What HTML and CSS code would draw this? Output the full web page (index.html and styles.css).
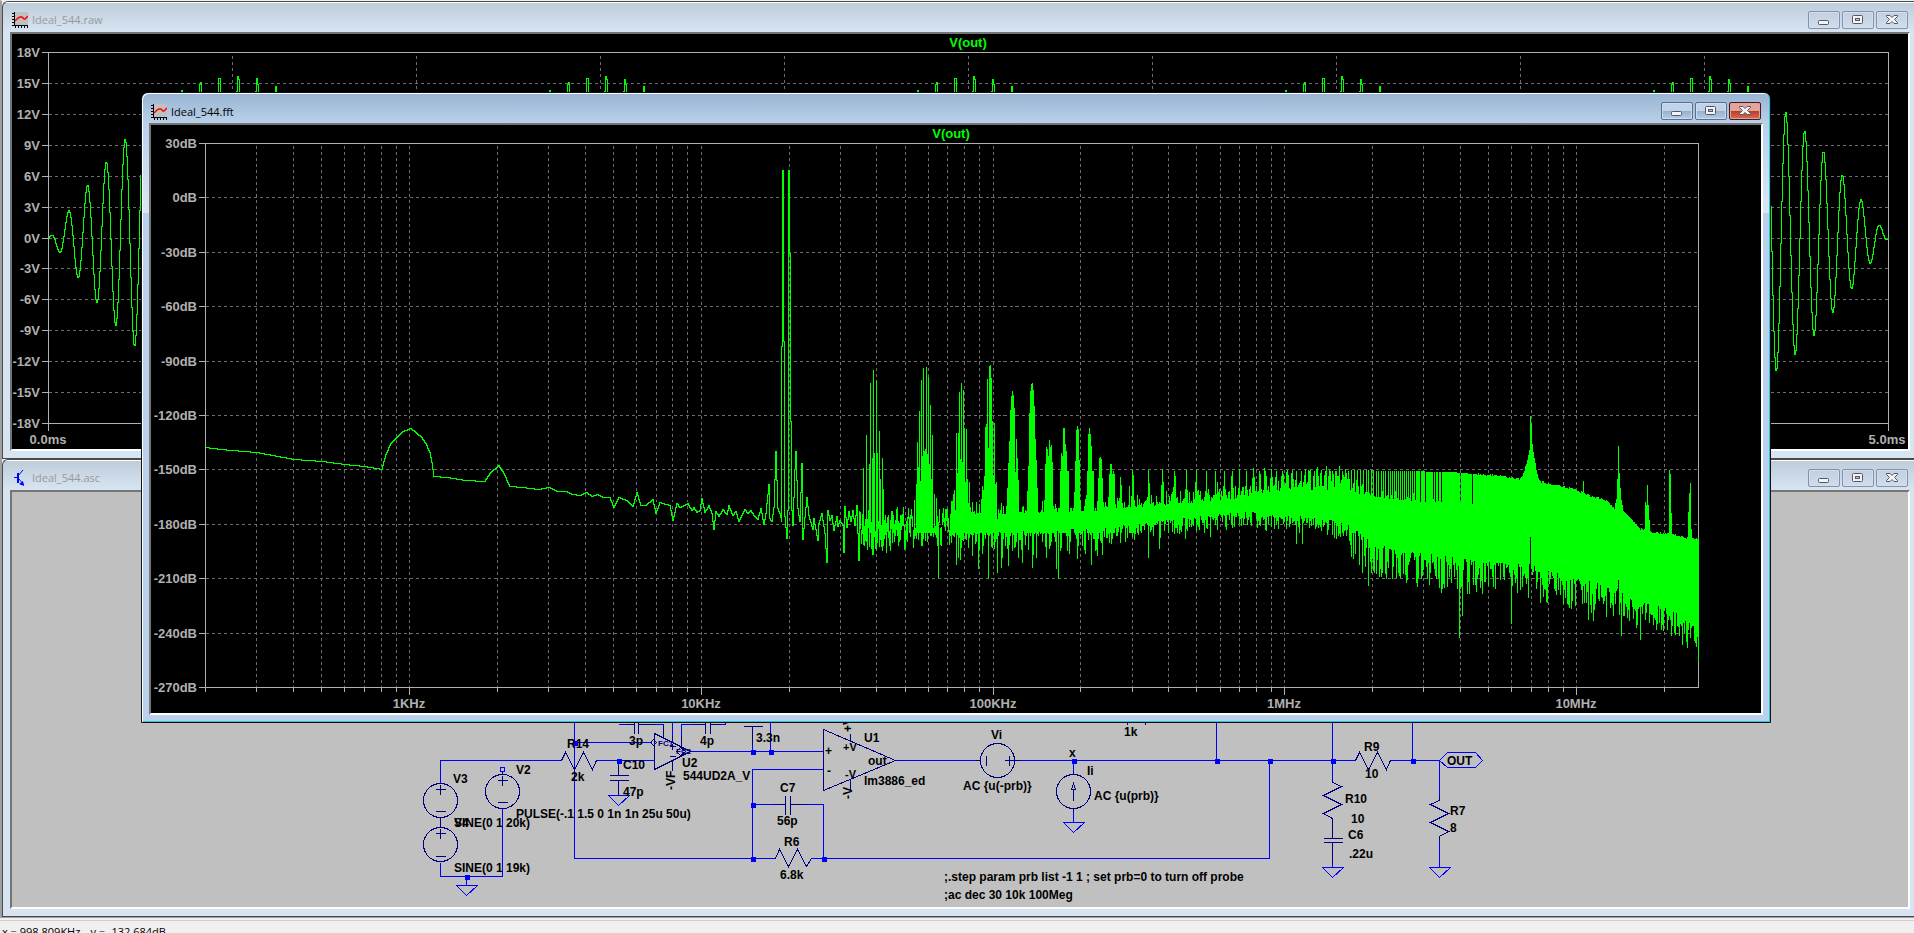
FILE: index.html
```html
<!DOCTYPE html>
<html lang="en">
<head>
    <meta charset="UTF-8">
    <meta name="viewport" content="width=device-width, initial-scale=1.0">
    <title>Ideal_544</title>
    <link rel="stylesheet" href="styles.css">
</head>
<body>
    <!-- shared icons -->
    <svg class="defs" aria-hidden="true">
        <symbol id="i-plot" viewBox="0 0 16 16">
            <path fill="#c0c0c0" d="M3 0h13v14H3z"/>
            <path fill="#000" d="M2 0h1v13h13v1H2zM0 1h2v1H0zM0 4h2v1H0zM0 7h2v1H0zM0 10h2v1H0zM0 13h2v1H0zM3 14h1v2H3zM6 14h1v2H6zM9 14h1v2H9zM12 14h1v2h-1zM15 14h1v2h-1z"/>
            <path fill="none" stroke="#f00" stroke-width="1.500" d="M3 9l3-3 2-1h2l2 2h1l3-3"/>
        </symbol>
        <symbol id="i-sch" viewBox="0 0 16 16">
            <path fill="none" stroke="#00f" stroke-width="2" d="M6 3v10"/>
            <path fill="none" stroke="#00f" d="M2 7.500h4M6 6l5-6M7 9l5 6"/>
            <path fill="#00f" d="M12 16l-5-2 4-3z"/>
        </symbol>
        <symbol id="i-min" viewBox="0 0 12 12">
            <rect x=".5" y="6.500" width="10" height="4" rx="1" fill="#f4f4f4" stroke="#535666"/>
        </symbol>
        <symbol id="i-max" viewBox="0 0 12 12">
            <rect x=".5" y="1.500" width="10" height="8" rx="1" fill="#f4f4f4" stroke="#535666"/>
            <rect x="3.500" y="4.500" width="4" height="2" fill="#b9cbe0" stroke="#535666"/>
        </symbol>
        <symbol id="i-close" viewBox="0 0 12 12">
            <path fill="#f4f4f4" stroke="#535666" d="M.5 1.500h3.500l2 2 2-2h3.500v1L8.500 5.500l3 3v1H8l-2-2-2 2H.5v-1l3-3-3-3z"/>
        </symbol>
    </svg>

    <main class="desktop">
        <section class="window">
            <header class="titlebar">
                <svg class="icon"><use href="#i-plot"/></svg>
                <h2>Ideal_544.raw</h2>
                <button type="button" aria-label="Minimize"><svg><use href="#i-min"/></svg></button>
                <button type="button" aria-label="Maximize"><svg><use href="#i-max"/></svg></button>
                <button type="button" aria-label="Close"><svg><use href="#i-close"/></svg></button>
            </header>
            <div class="client">
                <svg id="rawPlot" class="plot" viewBox="12 34 1896 415"></svg>
            </div>
        </section>

        <section class="window">
            <header class="titlebar">
                <svg class="icon"><use href="#i-sch"/></svg>
                <h2>Ideal_544.asc</h2>
                <button type="button" aria-label="Minimize"><svg><use href="#i-min"/></svg></button>
                <button type="button" aria-label="Maximize"><svg><use href="#i-max"/></svg></button>
                <button type="button" aria-label="Close"><svg><use href="#i-close"/></svg></button>
            </header>
            <div class="client">
                <svg class="schematic" viewBox="12 492 1896 415">
                    <g transform="translate(.5 .5)">
                        <g class="wire">
                            <path d="M440 782V760H561M596 760H654M574 720V858H775M574 742H651"/>
                            <path d="M440 862V876H502V808M466 876V885M618 760V770"/>
                            <path d="M690 751H823M752 751V745M770 720V751M823 769H752V858M752 804H772M806 804H823V858M811 858H1269V760"/>
                            <path d="M618 724H628M654 724H663V732M672 720V735M681 735V724H690M720 724H725"/>
                            <path d="M895 760H975M1020 760H1355M1390 760H1439V795M1216 720V760M1332 720V778M1412 720V760"/>
                            <path d="M1073 760V770M1073 812V822M1332 862V867M1439 840V867"/>
                            <path d="M456 885H477L466 895zM608 795H629L618 805zM1063 822H1084L1073 832zM1322 867H1343L1332 877zM1429 867H1450L1439 877z"/>
                            <path d="M1439 760L1447 752H1475L1482 760L1475 767H1447zM500 767H504V771H500z"/>
                        </g>
                        <g class="part">
                            <circle cx="440" cy="800" r="17"/>
                            <circle cx="440" cy="844" r="17"/>
                            <circle cx="502" cy="791" r="17"/>
                            <circle cx="997" cy="760" r="17"/>
                            <circle cx="1073" cy="791" r="17"/>
                            <path d="M440 817V827M435 789H445M440 784V794M435 811H445M435 833H445M440 828V838M435 856H445M497 780H507M502 775V785M497 802H507M502 771V774"/>
                            <path d="M561 760L565 752L574 769L583 752L592 769L596 760"/>
                            <path d="M618 765V775M609 775H628M609 780H628M618 780V795"/>
                            <path d="M654 733V769L690 751zM650 742L653 739L656 742L653 745z"/>
                            <path d="M625 724H634M634 720V733M638 720V733M638 724H655M663 724V737M672 735V741M681 735V746M690 724H705M705 720V733M710 720V733M710 724H720M725 724V720M672 760V770"/>
                            <path d="M669 746H675M672 743V749M669 756H675M676 751L680 747L685 751L680 755z"/>
                            <path d="M743 726H762M752 726V745"/>
                            <path d="M772 804H785M785 795V814M790 795V814M790 804H806"/>
                            <path d="M775 858L779 849L788 866L797 849L806 866L811 858"/>
                            <path d="M823 729V790L895 760zM850 733V741M850 779V789"/>
                            <path d="M975 760H980M986 755V765M1004 760H1020M1009 755V765"/>
                            <path d="M1073 770V774M1073 808V812M1073 789V800M1073 783L1071 789H1075z"/>
                            <path d="M1127 722V724M1145 722V724"/>
                            <path d="M1355 760L1359 752L1368 769L1377 752L1386 769L1390 760"/>
                            <path d="M1332 778V782L1341 786L1323 795L1341 804L1323 813L1332 818V838M1323 838H1342M1323 842H1342M1332 842V862"/>
                            <path d="M1439 795V800L1430 804L1448 813L1430 822L1448 831L1439 836V840"/>
                        </g>
                        <path class="dots" d="M572 740h5v5h-5zM616 758h5v5h-5zM750 749h5v5h-5zM768 749h5v5h-5zM750 802h5v5h-5zM750 856h5v5h-5zM821 856h5v5h-5zM464 874h5v5h-5zM1071 758h5v5h-5zM1214 758h5v5h-5zM1267 758h5v5h-5zM1330 758h5v5h-5zM1410 758h5v5h-5z"/>
                    </g>
                    <g class="note">
                        <text x="453" y="783">V3</text>
                        <text x="454" y="827">V4</text>
                        <text x="454" y="827">SINE(0 1 20k)</text>
                        <text x="454" y="872">SINE(0 1 19k)</text>
                        <text x="516" y="774">V2</text>
                        <text x="516" y="818">PULSE(-.1 1.5 0 1n 1n 25u 50u)</text>
                        <text x="567" y="748">R14</text>
                        <text x="571" y="781">2k</text>
                        <text x="623" y="769">C10</text>
                        <text x="623" y="796">47p</text>
                        <text x="629" y="745">3p</text>
                        <text x="700" y="745">4p</text>
                        <text x="756" y="742">3.3n</text>
                        <text x="682" y="767">U2</text>
                        <text x="683" y="780">544UD2A_V</text>
                        <text class="pin" x="658" y="746">FC1</text>
                        <text class="pin" x="676" y="754">FC2</text>
                        <text transform="translate(675 790) rotate(-90)">-VF</text>
                        <text x="780" y="792">C7</text>
                        <text x="777" y="825">56p</text>
                        <text x="784" y="846">R6</text>
                        <text x="780" y="879">6.8k</text>
                        <text x="864" y="742">U1</text>
                        <text x="864" y="785">lm3886_ed</text>
                        <text x="868" y="765">out</text>
                        <text x="825" y="755">+</text>
                        <text x="827" y="775">-</text>
                        <text class="supply" x="843" y="751">+V</text>
                        <text class="supply" x="845" y="778">-V</text>
                        <text transform="translate(852 732) rotate(-90)">+V</text>
                        <text transform="translate(852 799) rotate(-90)">-V</text>
                        <text x="991" y="739">Vi</text>
                        <text x="963" y="790">AC {u(-prb)}</text>
                        <text x="1069" y="757">x</text>
                        <text x="1087" y="775">Ii</text>
                        <text x="1094" y="800">AC {u(prb)}</text>
                        <text x="1124" y="736">1k</text>
                        <text x="1364" y="751">R9</text>
                        <text x="1365" y="778">10</text>
                        <text x="1345" y="803">R10</text>
                        <text x="1351" y="823">10</text>
                        <text x="1348" y="839">C6</text>
                        <text x="1349" y="858">.22u</text>
                        <text x="1447" y="765">OUT</text>
                        <text x="1450" y="815">R7</text>
                        <text x="1450" y="832">8</text>
                        <text x="944" y="881">;.step param prb list -1 1 ; set prb=0 to turn off probe</text>
                        <text x="944" y="899">;ac dec 30 10k 100Meg</text>
                    </g>
                </svg>
            </div>
        </section>

        <section class="window active">
            <header class="titlebar">
                <svg class="icon"><use href="#i-plot"/></svg>
                <h2>Ideal_544.fft</h2>
                <button type="button" aria-label="Minimize"><svg><use href="#i-min"/></svg></button>
                <button type="button" aria-label="Maximize"><svg><use href="#i-max"/></svg></button>
                <button type="button" class="close" aria-label="Close"><svg><use href="#i-close"/></svg></button>
            </header>
            <div class="client">
                <svg id="fftPlot" class="plot" viewBox="151 125 1610 588"></svg>
            </div>
        </section>
    </main>

    <footer class="status">
        <span>x = 998.809KHz</span>
        <span>y = -132.684dB</span>
    </footer>

    <script src="plots.js"></script>
</body>
</html>
```

FILE: styles.css
```css
* {
    box-sizing: border-box;
}
body {
    margin: 0;
    height: 100vh;
    overflow: hidden;
    display: flex;
    flex-direction: column;
    background-color: #f0f0f0;
    font-family: "Open Sans", "Noto Sans", sans-serif;
    font-size: 11px;
    color: #000;
}
.defs {
    display: none;
}

/* windows */
.desktop {
    position: relative;
    flex: none;
    border-left: 2px solid #a0a0a0;
    border-top: 1px solid #eef2ec;
    border-bottom: 1px solid #a0a0a0;
}
.window {
    border-left: 1px solid #4a4a4a;
    border-top: 1px solid #4a4a4a;
    border-bottom: 1px solid #4a4a4a;
    border-top-left-radius: 6px;
    padding: 0 4px 7px 7px;
    background: linear-gradient(#fff 0, #fff 1px, #bfcdda 1px, #d7e4f2 30px);
}
.titlebar {
    display: flex;
    align-items: center;
    gap: 2px;
    height: 30px;
    padding: 0 2px;
}
.titlebar .icon {
    width: 16px;
    height: 16px;
    margin-top: 6px;
}
.titlebar h2 {
    flex: 1;
    margin: 6px 0 0 2px;
    font-size: 11px;
    line-height: 16px;
    font-weight: normal;
    color: #999;
}
.titlebar button {
    width: 32px;
    height: 18px;
    margin-top: 5px;
    padding: 0;
    display: flex;
    align-items: center;
    justify-content: center;
    border: 1px solid #8591ab;
    border-radius: 2px;
    box-shadow: inset 0 0 0 1px #d3dfee;
    background: linear-gradient(#c1cfde, #cfdded);
}
.titlebar button svg {
    width: 12px;
    height: 12px;
}
.client {
    border: 2px solid #fff;
    border-top-color: #757575;
    border-left-color: #757575;
    background-color: #c0c0c0;
}
.plot, .schematic {
    display: block;
    width: 100%;
    height: auto;
}

.active {
    position: absolute;
    left: 139px;
    right: 143px;
    top: 91px;
    border: 1px solid #111;
    border-radius: 7px 7px 0 0;
    padding: 1px 7px 7px;
    background: linear-gradient(#98b4d2 0, #b9d1ea 30px, #dbe7f5 120px, #b9d1ea 120px);
    box-shadow: inset 1px 1px 0 #fff, inset -1px -1px 0 #35c0dc;
}
.active .titlebar {
    height: 29px;
}
.active .titlebar h2 {
    color: #000;
}
.active .titlebar button {
    border-color: #5e6e8a;
    box-shadow: inset 0 0 0 1px #cbdcef;
    background: linear-gradient(#c0d3e8 50%, #95b0cf 50%, #b4cce6);
}
.active .titlebar .close {
    border-color: #4c1620;
    box-shadow: inset 0 0 0 1px #e0a39b;
    background: linear-gradient(#e2a599 50%, #bd3a22 50%, #d0705a);
}

/* plots */
.plot {
    background-color: #000;
    font-family: "Liberation Sans", Arial, sans-serif;
    font-size: 13px;
    font-weight: bold;
}
.plot path {
    fill: none;
    shape-rendering: crispEdges;
}
.plot .grid {
    stroke: #6c6c6c;
    stroke-dasharray: 3 3;
}
.plot .axis {
    stroke: #b0b0b0;
}
.plot .trace {
    stroke: #0f0;
}
.plot text {
    fill: #b0b0b0;
}
.plot .name {
    fill: #0f0;
}

/* schematic */
.schematic path, .schematic circle {
    fill: none;
    shape-rendering: crispEdges;
}
.wire {
    stroke: #00f;
}
.part {
    stroke: #000080;
}
.schematic .dots {
    fill: #00f;
}
.note {
    font-family: "Liberation Sans", Arial, sans-serif;
    font-size: 12px;
    font-weight: bold;
}
.note .supply {
    font-size: 11px;
}
.note .pin {
    font-size: 8px;
    fill: #000080;
}

.status {
    flex: none;
    display: flex;
    gap: 10px;
    margin-top: 2px;
    border-top: 1px solid #d0d0d0;
    padding: 3px 2px;
    line-height: 16px;
    white-space: nowrap;
}
```

FILE: plots.js
```js
const NS = 'http://www.w3.org/2000/svg';

function addPath(svg, cls, d) {
    const p = document.createElementNS(NS, 'path');
    p.setAttribute('class', cls);
    p.setAttribute('d', d);
    p.setAttribute('transform', 'translate(.5 .5)');
    svg.appendChild(p);
}

function addText(svg, x, y, str, anchor, cls) {
    const t = document.createElementNS(NS, 'text');
    t.setAttribute('x', x);
    t.setAttribute('y', y);
    t.setAttribute('text-anchor', anchor);
    if (cls) t.setAttribute('class', cls);
    t.textContent = str;
    svg.appendChild(t);
}

// linear interpolation in a list of [x, y]
function lerp(pts, x) {
    if (x <= pts[0][0]) return pts[0][1];
    for (let i = 1; i < pts.length; i++) {
        if (x <= pts[i][0]) {
            const [x0, y0] = pts[i - 1], [x1, y1] = pts[i];
            return y0 + (y1 - y0) * (x - x0) / (x1 - x0);
        }
    }
    return pts[pts.length - 1][1];
}

// whole-pixel staircase through the points
function steps(pts) {
    let d = `M${pts[0][0]} ${pts[0][1]}`;
    for (let i = 1; i < pts.length; i++) {
        const [x0, y0] = pts[i - 1], [x1, y1] = pts[i];
        if (x1 === x0) d += `V${y1}`;
        for (let x = x0 + 1; x <= x1; x++) {
            d += `H${x}V${Math.round(y0 + (y1 - y0) * (x - x0) / (x1 - x0))}`;
        }
    }
    return d;
}

let seed = 544;
function rnd() {
    seed = (seed * 1664525 + 1013904223) % 4294967296;
    return seed / 4294967296;
}

function drawRaw() {
    const svg = document.getElementById('rawPlot');
    const L = 48, R = 1888, T = 52, B = 423;
    let grid = '', axis = `M${L} ${B + 7}V${T}H${R}V${B + 7}M${L} ${B}H${R}`;
    for (let v = 18; v >= -18; v -= 3) {
        const y = Math.round(T + (18 - v) * (B - T) / 36);
        if (v < 18 && v > -18) grid += `M${L} ${y}H${R}`;
        axis += `M41 ${y}H${L}`;
        addText(svg, 40, y + 5, v + 'V', 'end');
    }
    for (let i = 1; i < 10; i++) grid += `M${L + 184 * i} ${T + 3}V${B}`;
    addPath(svg, 'grid', grid);
    addPath(svg, 'axis', axis);
    addText(svg, L, 444, '0.0ms', 'middle');
    addText(svg, R - 1, 444, '5.0ms', 'middle');
    addText(svg, 968, 47, 'V(out)', 'middle', 'name');

    // 19 kHz + 20 kHz beat
    const pts = [];
    for (let x = L; x <= R; x++) {
        const v = 15.8 * Math.sin(Math.PI * (x - L) / 368) * Math.cos(2 * Math.PI * (x - 67.5) / 18.872);
        pts.push([x, Math.round(237.5 - v * 10.306)]);
    }
    addPath(svg, 'trace', steps(pts));
}

const LOW = [[205,447],[220,449],[256,452],[293,459],[322,461],[344,464],[364,466],[381,469],[382,465],[385,454],[390,443],[396,437],[402,431],[410,428],[415,432],[421,437],[425,443],[429,452],[431,462],[433,476],[446,477],[465,480],[484,481],[489,473],[498,465],[503,473],[509,486],[522,487],[538,489],[548,487],[557,491],[566,491],[572,494],[579,495],[586,492],[591,496],[597,494],[602,497],[609,497],[613,507],[618,497],[626,500],[632,506],[636,492],[640,505],[645,505],[652,499],[655,513],[659,502],[669,505],[672,520],[676,503],[679,507],[687,503],[691,510],[693,507],[696,512],[699,510],[701,498],[704,512],[708,505],[711,513],[713,529],[715,511],[718,516],[722,509],[726,514],[728,505],[732,515],[735,511],[738,521],[744,509],[747,513],[750,510],[753,515],[757,519],[760,508],[763,524],[765,513],[768,484],[769,518],[771,521],[773,507],[775,451],[777,508],[779,513],[781,521],[781,346],[782,170],[783,341],[784,516],[786,538],[787,510],[788,350],[788,170],[789,253],[790,421],[791,510],[792,525],[794,469],[795,451],[797,508],[799,521],[801,463],[802,539],[804,517],[806,497],[808,515],[812,529],[813,518],[817,540],[818,523],[821,513],[824,533],[826,562],[827,510],[829,520],[831,515],[833,530],[836,516],[837,526],[839,520],[842,525],[843,552],[844,506],[846,527],[848,511],[850,521],[852,510],[854,525],[856,505],[858,560],[859,510]];

// top of the column at each x for the first groups of products
const PEAKS = {
    863:467,866:434,869:463,870:382,872:457,873:369,874:452,876:379,877:452,879:430,880:478,882:457,883:488,
    914:499,916:483,917:441,918:466,919:410,920:480,921:379,922:455,923:367,924:450,925:448,926:366,927:453,928:376,929:463,930:404,931:478,932:434,934:493,936:497,
    953:493,954:489,956:432,957:472,958:432,959:391,960:458,961:382,962:461,963:389,964:427,965:481,966:428,967:478,968:502,969:481,
    982:485,983:489,984:475,985:426,986:423,987:378,988:447,989:365,990:364,991:377,992:420,993:474,994:422,995:483,996:481,997:518,
    1003:505,1007:487,1008:462,1009:440,1010:409,1011:395,1012:390,1013:394,1014:407,1015:471,1016:438,1017:457,1018:479,1019:511,1022:506,
    1026:510,1027:490,1028:465,1029:412,1030:390,1031:383,1032:382,1033:389,1034:405,1035:438,1036:459,1037:487,1038:511,
    1044:499,1045:463,1046:446,1047:448,1048:455,1049:439,1050:446,1051:444,1052:461,1053:505,
    1060:470,1061:452,1062:455,1063:427,1064:427,1065:443,1066:450,1067:470,1068:470,
    1074:491,1075:460,1076:429,1077:425,1078:428,1079:459,1080:499,
    1087:470,1088:433,1089:427,1090:433,1091:445,1092:470,1093:470,
    1098:477,1099:457,1100:456,1101:458,1102:477,
    1109:473,1110:463,1111:463,1112:473,1113:470,1114:473,1120:476,1121:484,1129:485,1131:495,1133:474,1137:494,1583:480
};

// lone downward spikes
const DIPS = {
    938:577,956:564,978:568,988:578,997:572,1001:567,1008:565,1022:562,1032:567,1056:568,1058:578,1077:558,1091:564,1102:554,
    1148:557,1159:548,1185:538,1210:536,1296:543,1302:543,1362:572,1365:566,1368:585,1398:572,1406:582,1417:586,1436:578,1441:592,1443:583,1447:586,
    1459:637,1462:615,1467:593,1469:593,1511:623,1517:592,1528:597,1540:602,1563:603,1588:619,1593:620,1606:616,1621:635,1636:627,1640:639,
    1656:629,1661:629,1684:632,1686:641,1690:637,1694:640,1696:646
};

const FLOOR_TOP = [[860,512],[900,514],[1000,513],[1100,510],[1150,505],[1200,501],[1240,498],[1260,492],[1300,489],[1345,490],[1365,494],[1400,500],[1440,503],[1472,503],[1473,473],[1500,475],[1520,478],[1523,473],[1526,463],[1529,450],[1530,414],[1531,423],[1532,443],[1534,457],[1536,468],[1538,477],[1541,481],[1560,485],[1576,489],[1593,496],[1605,499],[1614,507],[1616,497],[1617,478],[1618,444],[1619,473],[1621,500],[1623,510],[1630,517],[1640,528],[1644,529],[1645,500],[1646,503],[1647,483],[1648,503],[1649,520],[1650,531],[1668,533],[1669,470],[1670,473],[1671,512],[1672,533],[1687,537],[1688,512],[1689,492],[1690,482],[1691,528],[1692,537],[1698,538]];
const FLOOR_BOTTOM = [[860,528],[900,532],[980,532],[1000,531],[1100,527],[1150,521],[1200,515],[1240,510],[1280,514],[1300,515],[1330,519],[1350,524],[1365,537],[1380,544],[1400,550],[1430,553],[1455,556],[1500,562],[1527,562],[1529,555],[1530,533],[1531,543],[1533,558],[1535,570],[1550,570],[1580,579],[1600,582],[1617,586],[1618,576],[1620,586],[1635,598],[1650,604],[1670,607],[1685,616],[1698,630]];

function drawFft() {
    const svg = document.getElementById('fftPlot');
    const L = 205, R = 1698, T = 143, B = 687;
    const fx = f => Math.round(409 + 291.75 * Math.log10(f / 1000));
    let grid = '', axis = `M${L} ${B}V${T}H${R}V${B}M198 ${B}H${R}`;
    for (let db = 30; db >= -270; db -= 30) {
        const y = Math.round(T + (30 - db) * (B - T) / 300);
        if (db < 30 && db > -270) grid += `M${L} ${y}H${R}`;
        axis += `M198 ${y}H${L}`;
        addText(svg, 197, y + 5, db + 'dB', 'end');
    }
    for (let dec = 100; dec <= 1e7; dec *= 10) {
        for (let k = 1; k < 10; k++) {
            const x = fx(k * dec);
            if (x < L || x > R) continue;
            if (x > L) grid += `M${x} ${T + 2}V${B}`;
            axis += `M${x} ${B}v${k === 1 ? 7 : 4}`;
        }
    }
    addPath(svg, 'grid', grid);
    addPath(svg, 'axis', axis);
    addText(svg, fx(1e3), 708, '1KHz', 'middle');
    addText(svg, fx(1e4), 708, '10KHz', 'middle');
    addText(svg, fx(1e5), 708, '100KHz', 'middle');
    addText(svg, fx(1e6), 708, '1MHz', 'middle');
    addText(svg, fx(1e7), 708, '10MHz', 'middle');
    addText(svg, 951, 138, 'V(out)', 'middle', 'name');

    let d = steps(LOW);

    // odd products of 20 kHz
    const comb = {};
    for (let n = 15; n * 20000 < 4.5e6; n += 2) {
        const x = fx(n * 20000);
        comb[x] = x < 1350 ? 470 - Math.floor(rnd() * rnd() * 6) : lerp([[1350, 469], [1450, 471], [1473, 473]], x);
        if (x > 1415 && rnd() < 0.4) comb[x + 1] = comb[x];
    }

    for (let x = 860; x <= R; x++) {
        let top = lerp(FLOOR_TOP, x), bottom = lerp(FLOOR_BOTTOM, x);
        if (x < 950) {
            top = 506 + rnd() * 24;
            bottom = top + 6 + rnd() * 16;
        } else if (x < 1473) {
            const depth = x < 1240 ? 14 : 9;
            top -= rnd() * rnd() * depth * 1.5;
            if (comb[x - 1] || comb[x + 1]) top -= x < 1350 ? rnd() * 18 : 0;
        } else {
            top += (rnd() - 0.5) * 2;
        }
        const swing = x < 950 ? 12 : x < 1100 ? 28 : x < 1350 ? 18 : 34;
        bottom += Math.pow(rnd(), 1.6) * swing;
        if (PEAKS[x]) {
            top = PEAKS[x];
            bottom = Math.max(bottom, 532);
        }
        if (comb[x]) top = comb[x];
        if (DIPS[x]) bottom = DIPS[x];
        d += `M${x} ${Math.round(top)}V${Math.round(bottom)}`;
    }
    addPath(svg, 'trace', d);
}

drawRaw();
drawFft();
```
